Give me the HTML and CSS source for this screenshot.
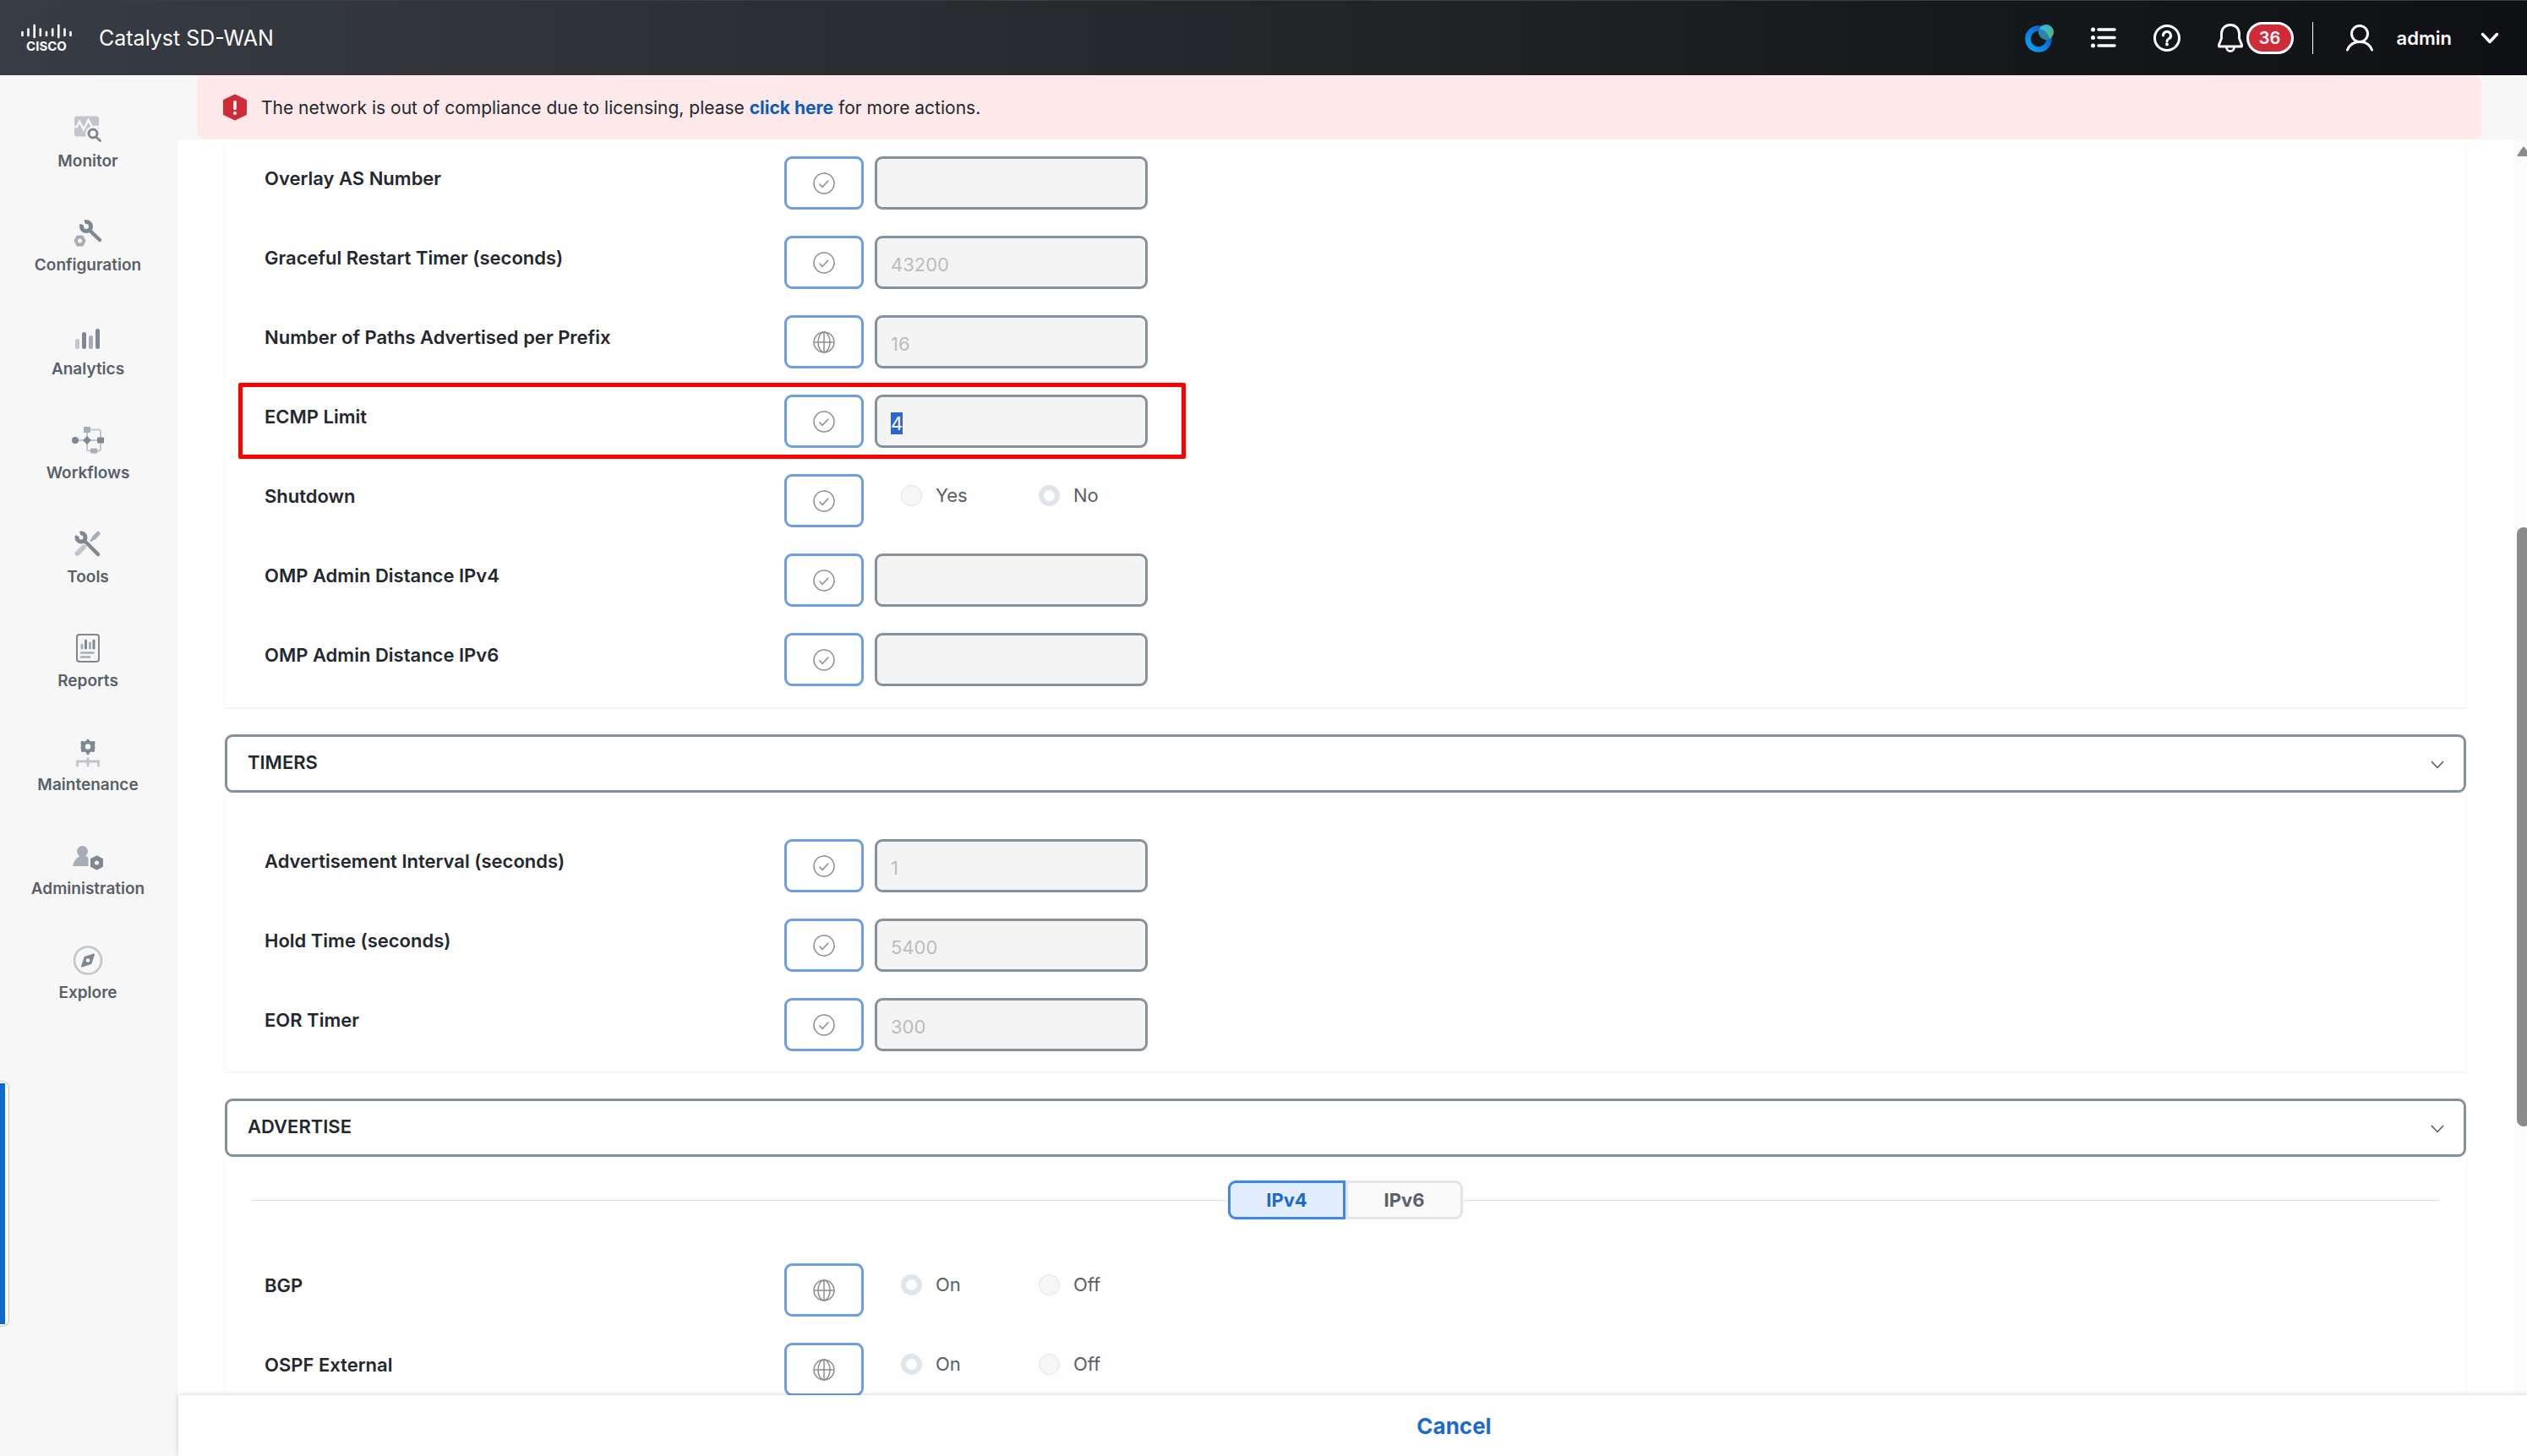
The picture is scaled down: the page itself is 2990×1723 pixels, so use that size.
FILE: index.html
```
<!DOCTYPE html>
<html lang="en">
<head>
    <meta charset="UTF-8">
    <meta name="viewport" content="width=device-width, initial-scale=1.0">
    <title>Catalyst SD-WAN</title>
    <link rel="stylesheet" href="styles.css">
</head>
<body>
    <!-- shared icons -->
    <svg class="sprite" aria-hidden="true">
        <symbol id="icon-check" viewBox="0 0 26 26">
            <circle cx="13" cy="13" r="12" fill="none" stroke="#8e8e8e" stroke-width="1.5"/>
            <path d="M7.5 13.5l3.5 3.8 7.2-7.6" fill="none" stroke="#8e8e8e" stroke-width="1.5"/>
        </symbol>
        <symbol id="icon-globe" viewBox="0 0 26 26">
            <g fill="none" stroke="#8e8e8e" stroke-width="1.5">
                <circle cx="13" cy="13" r="12"/>
                <ellipse cx="13" cy="13" rx="7" ry="12"/>
                <path d="M13 1v24M1 13h24"/>
            </g>
        </symbol>
        <symbol id="icon-down" viewBox="0 0 16 10">
            <path d="M1 1l7 7.5L15 1" fill="none" stroke="#555" stroke-width="1.5"/>
        </symbol>
    </svg>

    <header class="topbar">
        <svg class="logo" viewBox="0 0 60 40" role="img" aria-label="Cisco">
            <path d="M1.5 13v4M8.5 9.500v7.5M15.700 5v14M22.800 9.500v7.5M30 13v4M37.200 9.500v7.5M44.300 5v14M51.500 9.500v7.5M58.500 13v4" stroke="#fff" stroke-width="2.6" stroke-linecap="round"/>
            <text class="logo-text" x="30" y="35" text-anchor="middle">CISCO</text>
        </svg>
        <span class="product">Catalyst SD-WAN</span>

        <div class="tools">
            <button class="tool" aria-label="Assistant">
                <svg width="34" height="34" viewBox="0 0 34 34">
                    <defs>
                        <linearGradient id="ring" x1="1" y1="0" x2="0" y2="1">
                            <stop offset="0" stop-color="#0a50c8"/>
                            <stop offset="1" stop-color="#0aa5f5"/>
                        </linearGradient>
                        <linearGradient id="orb" x1="0" y1="0" x2="0" y2="1">
                            <stop offset="0" stop-color="#35c9f2"/>
                            <stop offset="1" stop-color="#74bf4b"/>
                        </linearGradient>
                    </defs>
                    <circle cx="16" cy="18" r="12.5" fill="none" stroke="url(#ring)" stroke-width="6.5"/>
                    <circle cx="25" cy="10" r="9" fill="url(#orb)" opacity=".9"/>
                    <path d="M17 6a15.5 15.5 0 0 1 12 12a9 9 0 0 1-12-12z" fill="#1b74bd" opacity=".75"/>
                </svg>
            </button>
            <button class="tool" aria-label="Task list">
                <svg width="30" height="26" viewBox="0 0 30 26">
                    <path d="M9 3h19M9 12.5h19M9 22h19" stroke="#fff" stroke-width="3.5" stroke-linecap="round"/>
                    <g fill="#fff"><circle cx="2.5" cy="3" r="2.5"/><circle cx="2.5" cy="12.5" r="2.5"/><circle cx="2.5" cy="22" r="2.5"/></g>
                </svg>
            </button>
            <button class="tool" aria-label="Help">
                <svg width="32" height="32" viewBox="0 0 32 32" fill="none" stroke="#fff" stroke-width="3">
                    <circle cx="16" cy="16" r="14.5"/>
                    <path d="M11.5 13a4.500 4.500 0 1 1 6.500 4q-2 1-2 3" stroke-linecap="round"/>
                    <circle cx="16" cy="23.5" r="2" fill="#fff" stroke="none"/>
                </svg>
            </button>
            <button class="tool alerts" aria-label="Alerts">
                <svg width="30" height="34" viewBox="0 0 30 34" fill="none" stroke="#fff" stroke-width="2.8" stroke-linejoin="round">
                    <path d="M15 1.5C8.5 1.5 4.500 6 4.500 12v5.500L1.5 25v2h27v-2l-3-7.5V12C25.5 6 21.5 1.5 15 1.5z"/>
                    <path d="M10.5 28a4.500 4.500 0 0 0 9 0"/>
                </svg>
                <span class="badge">36</span>
            </button>
            <span class="divider"></span>
            <button class="tool user">
                <svg width="32" height="32" viewBox="0 0 32 32" fill="none" stroke="#fff" stroke-width="3" stroke-linecap="round">
                    <circle cx="16" cy="11" r="9.5"/>
                    <path d="M1.5 30c2.5-6 8-9.500 14.5-9.500S28 24 30.5 30"/>
                </svg>
                <span>admin</span>
                <svg width="22" height="14" viewBox="0 0 22 14">
                    <path d="M2.5 2.5l8.5 9 8.5-9" fill="none" stroke="#fff" stroke-width="3.5" stroke-linecap="round" stroke-linejoin="round"/>
                </svg>
            </button>
        </div>
    </header>

    <div class="page">
        <nav class="sidebar">
            <a href="#" class="nav-item">
                <svg width="40" height="40" viewBox="0 0 40 40">
                    <rect x="4" y="4.5" width="29" height="24" rx="3" fill="#c2c6cc"/>
                    <path d="M3 17h4l3-6 5 9 5.5-11 4.5 8h9" fill="none" stroke="#f7f7f7" stroke-width="2.5"/>
                    <circle cx="26" cy="25.5" r="9" fill="#f7f7f7"/>
                    <circle cx="26" cy="25" r="5" fill="none" stroke="#7f8790" stroke-width="3"/>
                    <path d="M29.5 29l5 4.5" stroke="#7f8790" stroke-width="3" stroke-linecap="round"/>
                </svg>
                Monitor
            </a>
            <a href="#" class="nav-item">
                <svg width="40" height="40" viewBox="0 0 40 40">
                    <circle cx="18" cy="12" r="5.5" fill="none" stroke="#7f8790" stroke-width="5"/>
                    <path d="M18 12L7 7 14 0z" fill="#f7f7f7"/>
                    <path d="M22 16.5L34 28" stroke="#7f8790" stroke-width="4.5" stroke-linecap="round"/>
                    <path d="M7 23h7l3 6-3 6H7l-3-6z" fill="#a7adb6" stroke="#a7adb6" stroke-linejoin="round"/>
                    <circle cx="10.5" cy="29" r="2.5" fill="#f7f7f7"/>
                </svg>
                Configuration
            </a>
            <a href="#" class="nav-item">
                <svg width="40" height="40" viewBox="0 0 40 40">
                    <rect x="5" y="22" width="5" height="12" rx="2.5" fill="#c2c6cc"/>
                    <rect x="13" y="14" width="5" height="20" rx="2.5" fill="#7f8790"/>
                    <rect x="21" y="18" width="5" height="16" rx="2.5" fill="#a7adb6"/>
                    <rect x="29" y="10" width="5" height="24" rx="2.5" fill="#7f8790"/>
                </svg>
                Analytics
            </a>
            <a href="#" class="nav-item">
                <svg width="40" height="40" viewBox="0 0 40 40">
                    <path d="M5 19h30M19 6.5h14q2 0 2 2v21q0 2-2 2H21q-2 0-2-2z" fill="none" stroke="#c2c6cc" stroke-width="2"/>
                    <circle cx="5" cy="19" r="4" fill="#7f8790"/>
                    <path d="M19 14l5 5-5 5-5-5z" fill="#7f8790"/>
                    <rect x="31" y="15.5" width="8" height="7" rx="1" fill="#7f8790"/>
                    <rect x="15" y="3" width="8" height="7" rx="1" fill="#a7adb6"/>
                    <rect x="23" y="28.5" width="8" height="6" rx="1" fill="#a7adb6"/>
                </svg>
                Workflows
            </a>
            <a href="#" class="nav-item">
                <svg width="40" height="40" viewBox="0 0 40 40">
                    <path d="M15 22.5L7.5 30" stroke="#c2c6cc" stroke-width="6" stroke-linecap="round"/>
                    <path d="M23 15.5l5-5" stroke="#a7adb6" stroke-width="3"/>
                    <path d="M27.5 11L32 6.5" stroke="#a7adb6" stroke-width="5" stroke-linecap="round"/>
                    <circle cx="12" cy="11" r="5" fill="none" stroke="#7f8790" stroke-width="5"/>
                    <path d="M12 11L2 7l7-7z" fill="#f7f7f7"/>
                    <path d="M16 15l16 16" stroke="#7f8790" stroke-width="4.5" stroke-linecap="round"/>
                </svg>
                Tools
            </a>
            <a href="#" class="nav-item">
                <svg width="40" height="40" viewBox="0 0 40 40">
                    <rect x="7" y="3" width="26" height="32" rx="3" fill="none" stroke="#7f8790" stroke-width="2"/>
                    <path d="M13 15v4M22.5 13v6" stroke="#a7adb6" stroke-width="3" stroke-linecap="round"/>
                    <path d="M17.5 10v9M27 10v9" stroke="#7f8790" stroke-width="3" stroke-linecap="round"/>
                    <path d="M12 24.5h14.5M12 29.5h10" stroke="#a7adb6" stroke-width="2.5" stroke-linecap="round"/>
                </svg>
                Reports
            </a>
            <a href="#" class="nav-item">
                <svg width="40" height="40" viewBox="0 0 40 40">
                    <path d="M20 4.5l2.5 3 5-.5-.5 5 .5 1-.5 5-4.5-.5-2.5 4-2.5-4-4.5.5-.5-5 .5-1-.5-5 5 .5z" fill="#7f8790" stroke="#7f8790" stroke-width="2" stroke-linejoin="round"/>
                    <circle cx="20" cy="12.5" r="3.2" fill="#f7f7f7"/>
                    <path d="M7.5 35v-5h25v5M20 26.5V35" fill="none" stroke="#c2c6cc" stroke-width="3" stroke-linecap="round"/>
                </svg>
                Maintenance
            </a>
            <a href="#" class="nav-item">
                <svg width="40" height="40" viewBox="0 0 40 40">
                    <circle cx="13.5" cy="13.5" r="6.5" fill="#a7adb6"/>
                    <path d="M2.5 31v-2q2-7 8-10h6q3 0 4 2v10z" fill="#a7adb6"/>
                    <path d="M30.5 19.5L37 23v8l-6.5 3.500L24 31v-8z" fill="#7f8790" stroke="#7f8790" stroke-width="2" stroke-linejoin="round"/>
                    <circle cx="30.5" cy="27" r="2.5" fill="#f7f7f7"/>
                </svg>
                Administration
            </a>
            <a href="#" class="nav-item">
                <svg width="40" height="40" viewBox="0 0 40 40">
                    <circle cx="20" cy="19.5" r="16" fill="none" stroke="#c2c6cc" stroke-width="2.6"/>
                    <path d="M13 26.5L16.5 16 27 12.5 23.5 23z" fill="#7f8790" stroke="#7f8790" stroke-width="2" stroke-linejoin="round"/>
                    <circle cx="20" cy="19.5" r="2.3" fill="#f7f7f7"/>
                </svg>
                Explore
            </a>
            <div class="side-handle"></div>
        </nav>

        <main class="content">
            <div class="banner">
                <svg width="30" height="32" viewBox="0 0 30 32">
                    <path d="M15 2l12.5 6v16L15 30 2.5 24V8z" fill="#ce2c38" stroke="#ce2c38" stroke-width="3" stroke-linejoin="round"/>
                    <path d="M15 9.500v8" stroke="#fff" stroke-width="3.5" stroke-linecap="round"/>
                    <circle cx="15" cy="23" r="2" fill="#fff"/>
                </svg>
                <p>The network is out of compliance due to licensing, please <a href="#">click here</a> for more actions.</p>
            </div>

            <div class="scroller">
                <form class="form">
                    <section class="panel basic">
                        <div class="row">
                            <label for="overlay">Overlay AS Number</label>
                            <button type="button" class="scope" aria-label="Default"><svg><use href="#icon-check"/></svg></button>
                            <input type="text" id="overlay" class="field" disabled>
                        </div>
                        <div class="row">
                            <label for="restart">Graceful Restart Timer (seconds)</label>
                            <button type="button" class="scope" aria-label="Default"><svg><use href="#icon-check"/></svg></button>
                            <input type="text" id="restart" class="field" value="43200" disabled>
                        </div>
                        <div class="row">
                            <label for="paths">Number of Paths Advertised per Prefix</label>
                            <button type="button" class="scope" aria-label="Global"><svg><use href="#icon-globe"/></svg></button>
                            <input type="text" id="paths" class="field" value="16" disabled>
                        </div>
                        <div class="row highlight">
                            <label for="ecmp">ECMP Limit</label>
                            <button type="button" class="scope" aria-label="Default"><svg><use href="#icon-check"/></svg></button>
                            <input type="text" id="ecmp" class="field" value="4" readonly>
                        </div>
                        <div class="row">
                            <span class="label">Shutdown</span>
                            <button type="button" class="scope" aria-label="Default"><svg><use href="#icon-check"/></svg></button>
                            <div class="radios">
                                <label><input type="radio" name="shutdown" disabled> Yes</label>
                                <label><input type="radio" name="shutdown" checked disabled> No</label>
                            </div>
                        </div>
                        <div class="row">
                            <label for="dist4">OMP Admin Distance IPv4</label>
                            <button type="button" class="scope" aria-label="Default"><svg><use href="#icon-check"/></svg></button>
                            <input type="text" id="dist4" class="field" disabled>
                        </div>
                        <div class="row">
                            <label for="dist6">OMP Admin Distance IPv6</label>
                            <button type="button" class="scope" aria-label="Default"><svg><use href="#icon-check"/></svg></button>
                            <input type="text" id="dist6" class="field" disabled>
                        </div>
                    </section>

                    <button type="button" class="section-head">TIMERS <svg><use href="#icon-down"/></svg></button>
                    <section class="panel timers">
                        <div class="row">
                            <label for="interval">Advertisement Interval (seconds)</label>
                            <button type="button" class="scope" aria-label="Default"><svg><use href="#icon-check"/></svg></button>
                            <input type="text" id="interval" class="field" value="1" disabled>
                        </div>
                        <div class="row">
                            <label for="hold">Hold Time (seconds)</label>
                            <button type="button" class="scope" aria-label="Default"><svg><use href="#icon-check"/></svg></button>
                            <input type="text" id="hold" class="field" value="5400" disabled>
                        </div>
                        <div class="row">
                            <label for="eor">EOR Timer</label>
                            <button type="button" class="scope" aria-label="Default"><svg><use href="#icon-check"/></svg></button>
                            <input type="text" id="eor" class="field" value="300" disabled>
                        </div>
                    </section>

                    <button type="button" class="section-head">ADVERTISE <svg><use href="#icon-down"/></svg></button>
                    <section class="panel advertise">
                        <div class="switch">
                            <button type="button" class="tab active">IPv4</button>
                            <button type="button" class="tab">IPv6</button>
                        </div>
                        <div class="row">
                            <span class="label">BGP</span>
                            <button type="button" class="scope" aria-label="Global"><svg><use href="#icon-globe"/></svg></button>
                            <div class="radios">
                                <label><input type="radio" name="bgp" checked disabled> On</label>
                                <label><input type="radio" name="bgp" disabled> Off</label>
                            </div>
                        </div>
                        <div class="row">
                            <span class="label">OSPF External</span>
                            <button type="button" class="scope" aria-label="Global"><svg><use href="#icon-globe"/></svg></button>
                            <div class="radios">
                                <label><input type="radio" name="ospf" checked disabled> On</label>
                                <label><input type="radio" name="ospf" disabled> Off</label>
                            </div>
                        </div>
                    </section>
                </form>
                <div class="track">
                    <svg width="16" height="12" viewBox="0 0 16 12"><path d="M8 1.5L14.5 11h-13z" fill="#8b8b8b" stroke="#8b8b8b" stroke-width="2" stroke-linejoin="round"/></svg>
                    <div class="thumb"></div>
                </div>
            </div>

            <footer class="footer">
                <button class="cancel">Cancel</button>
            </footer>
        </main>
    </div>

    <script>
        // start with the ECMP value selected
        const ecmp = document.getElementById('ecmp');
        ecmp.focus({ preventScroll: true });
        ecmp.select();
    </script>
</body>
</html>
```
FILE: styles.css
```
*, *::before, *::after {
    box-sizing: border-box;
}

body {
    margin: 0;
    height: 100vh;
    display: flex;
    flex-direction: column;
    overflow: hidden;
    font-family: Inter, "Liberation Sans", sans-serif;
    font-size: 22px;
    color: #23282e;
    background-color: #f7f7f7;
}

button {
    font-family: inherit;
    font-size: inherit;
    color: inherit;
    padding: 0;
    border: none;
    background: none;
    cursor: pointer;
}

.sprite {
    display: none;
}

/* top bar */
.topbar {
    display: flex;
    align-items: center;
    flex: none;
    height: 89px;
    padding: 0 33px 0 25px;
    color: #fff;
    border-top: 1px solid #3d3e3a;
    background: linear-gradient(90deg, #373c45 0%, #2f3337 24%, #15181b 80%, #0f1013 100%);
}

.logo {
    width: 60px;
    height: 40px;
    margin-right: 32px;
}

.logo-text {
    font-size: 15px;
    font-weight: 700;
    fill: #fff;
}

.product {
    font-size: 25px;
}

.tools {
    display: flex;
    align-items: center;
    margin-left: auto;
    gap: 44px;
}

.tool {
    display: flex;
    align-items: center;
}

.alerts {
    gap: 4px;
    margin-right: -22px;
}

.badge {
    width: 56px;
    height: 38px;
    line-height: 32px;
    border: 3px solid #fff;
    border-radius: 19px;
    background-color: #ce2c38;
    font-size: 20px;
    font-weight: 600;
}

.divider {
    width: 1px;
    height: 38px;
    margin-right: -5px;
    background-color: #fff;
}

.user {
    font-weight: 600;
    gap: 28px;
}

.user svg:last-child {
    margin-left: 6px;
}

/* left navigation */
.page {
    display: flex;
    flex: 1;
    min-height: 0;
}

.sidebar {
    position: relative;
    flex: none;
    width: 211px;
    padding: 44px 3px 0 0;
}

.nav-item {
    display: flex;
    flex-direction: column;
    align-items: center;
    height: 123px;
    line-height: 35px;
    font-size: 19px;
    font-weight: 600;
    color: #596069;
    text-decoration: none;
}

.side-handle {
    position: absolute;
    left: 0;
    bottom: 153px;
    width: 11px;
    height: 291px;
    border: solid #c8c8c8;
    border-width: 1px 1px 1px 0;
    border-radius: 0 8px 8px 0;
    background: linear-gradient(#0d6acd, #0d6acd) 0 2px / 6px 285px no-repeat #fff;
}

/* content */
.content {
    display: flex;
    flex: 1;
    flex-direction: column;
    min-width: 0;
}

.banner {
    display: flex;
    align-items: center;
    flex: none;
    height: 76px;
    margin: 0 54px 0 22px;
    padding-left: 30px;
    gap: 16px;
    border-radius: 10px;
    background-color: #fde8ea;
}

.banner p {
    margin: 0;
    font-size: 21px;
}

.banner a {
    color: #0d5cbd;
    font-weight: 700;
    text-decoration: none;
}

.scroller {
    display: flex;
    flex: 1;
    min-height: 0;
    overflow: hidden;
    background-color: #fff;
}

.form {
    flex: 1;
    padding: 0 56px 0 55px;
}

.panel {
    display: flex;
    flex-direction: column;
    gap: 31px;
    margin-bottom: 32px;
    padding-left: 47px;
    background-color: #fefefe;
    box-shadow: 0 1px 2px rgba(0,0,0,0.08);
}

.basic {
    padding-top: 20px;
    padding-bottom: 25px;
}

.timers {
    padding-top: 55px;
    padding-bottom: 24px;
}

.advertise {
    padding-top: 28px;
    padding-bottom: 31px;
}

.row {
    position: relative;
    display: grid;
    grid-template-columns: 615px 94px 1fr;
    height: 63px;
}

.row > label, .row > .label {
    line-height: 53px;
    font-weight: 600;
}

.scope {
    display: flex;
    align-items: center;
    justify-content: center;
    border: 3px solid #6c9ee1;
    border-radius: 9px;
    background-color: #fff;
}

.scope svg {
    width: 26px;
    height: 26px;
}

.field {
    width: 323px;
    margin-left: 13px;
    padding: 5px 16px 0;
    border: 3px solid #88909a;
    border-radius: 9px;
    outline: none;
    background-color: #f4f4f4;
    font-family: inherit;
    font-size: 22px;
    color: #bcbcbc;
}

.field::selection {
    color: #fff;
    background-color: #2f65d0;
}

/* box around the row being edited */
.highlight::after {
    content: "";
    position: absolute;
    top: -14px;
    left: -31px;
    width: 1121px;
    height: 90px;
    border: 5px solid #fe0000;
    border-radius: 2px;
    pointer-events: none;
}

.radios {
    display: flex;
    height: 50px;
    margin-left: 44px;
}

.radios label {
    display: flex;
    align-items: center;
    flex: none;
    width: 163px;
    gap: 16px;
    color: #596069;
}

.radios input {
    appearance: none;
    width: 25px;
    height: 25px;
    margin: 0;
    border: 1px solid #e3e3e6;
    border-radius: 50%;
    background-color: #f6f6f6;
}

.radios input:checked {
    border: 6px solid #e1e4e8;
    background-color: #fff;
}

.section-head {
    display: flex;
    align-items: center;
    justify-content: space-between;
    width: 100%;
    height: 69px;
    padding: 0 23px 3px 24px;
    border: 3px solid #88909a;
    border-radius: 9px;
    background-color: #fff;
    font-weight: 600;
}

.section-head svg {
    width: 16px;
    height: 10px;
    margin-top: 6px;
}

.switch {
    display: flex;
    align-items: center;
    margin: 0 32px 21px -15px;
}

/* rules left and right of the tabs */
.switch::before, .switch::after {
    content: "";
    flex: 1;
    height: 1px;
    background-color: #dedede;
}

.tab {
    width: 139px;
    height: 46px;
    border: 3px solid #e1e4e8;
    border-radius: 0 9px 9px 0;
    background-color: #fafafa;
    color: #596069;
    font-weight: 700;
}

.tab.active {
    border-color: #3f86e6;
    border-radius: 9px 0 0 9px;
    background-color: #e2eefe;
    color: #1d69cc;
}

.track {
    flex: none;
    width: 16px;
    padding: 8px 0 0 4px;
    overflow: hidden;
    background-color: #fbfbfb;
}

.track svg {
    display: block;
}

.thumb {
    width: 16px;
    height: 709px;
    margin-top: 439px;
    border-radius: 8px;
    background-color: #8b8b8b;
}

.footer {
    z-index: 1;
    flex: none;
    display: flex;
    align-items: center;
    justify-content: center;
    height: 72px;
    padding-left: 240px;
    background-color: #fff;
    box-shadow: 0 0 6px rgba(0,0,0,0.2);
}

.cancel {
    color: #1d69cc;
    font-size: 26px;
    font-weight: 700;
}
```
